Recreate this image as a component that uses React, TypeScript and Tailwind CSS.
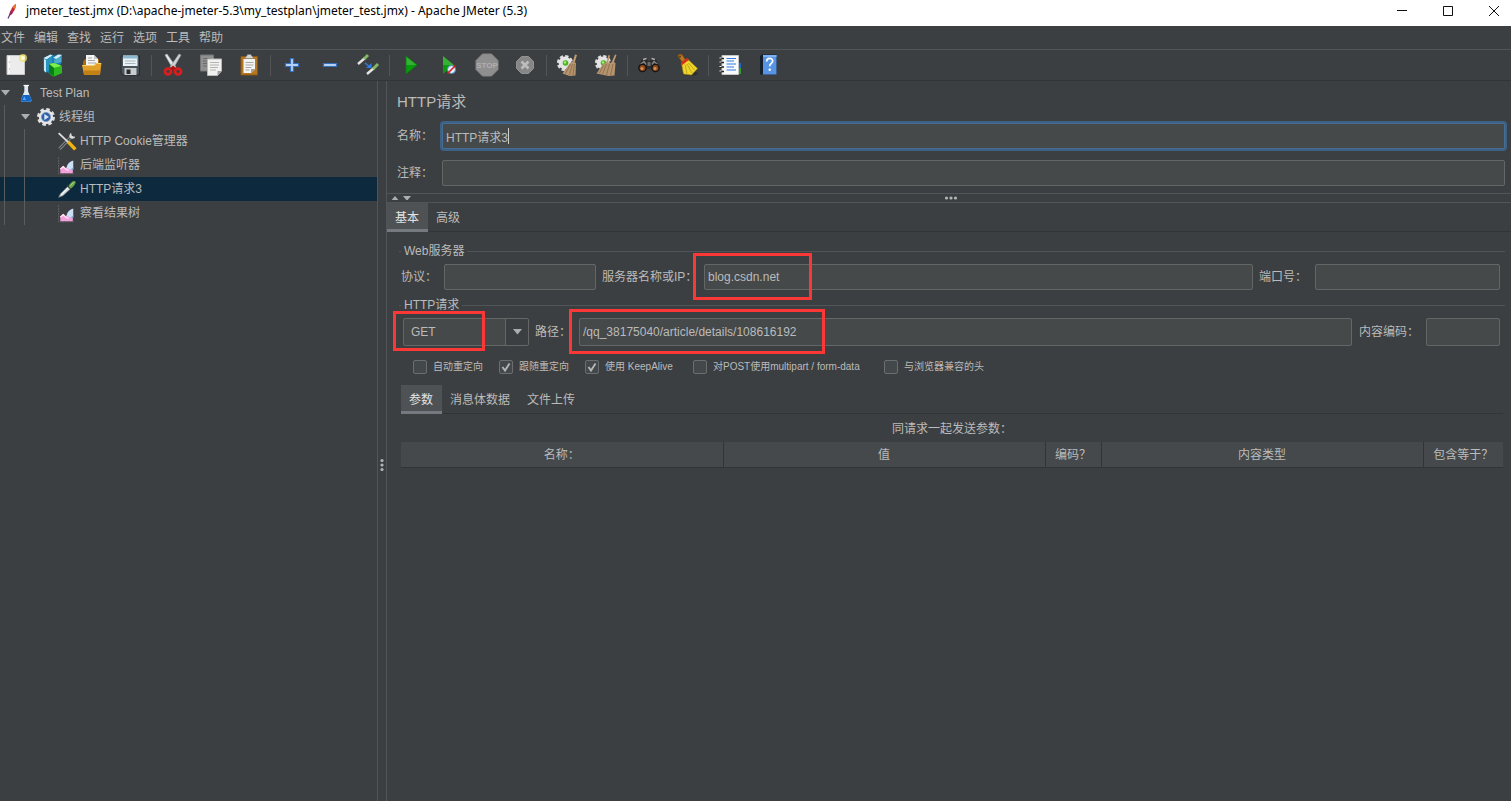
import React from "react";

const line = "border-[#515557]";
const fieldShape = "block w-full rounded-[2px] border bg-[#45494a] px-[3px] text-xs text-[#bbbbbb] outline-none";
const fieldBase = `${fieldShape} border-[#656767]`;
const fieldFocused = `${fieldShape} border-[#466d94] ring-2 ring-[#3d6185]`;

/* ---------- toolbar icons ---------- */

function Svg({ children, className = "size-6" }: { children: React.ReactNode; className?: string }) {
  return (
    <svg viewBox="0 0 24 24" className={className} fill="none" aria-hidden="true">
      {children}
    </svg>
  );
}

const NewIcon = () => (
  <Svg>
    <path d="M3 2.500h17.500v19H3z" fill="#ececec" stroke="#c9c9c9" />
    <path d="M4 3.500h2v17H4z" fill="#fbfbfb" />
    <circle cx="5.500" cy="9" r=".6" fill="#999" />
    <circle cx="5.500" cy="16" r=".6" fill="#999" />
    <circle cx="19" cy="5" r="4" fill="#f3e36a" opacity=".75" />
    <circle cx="19" cy="5" r="2" fill="#fffde0" />
  </Svg>
);

const TemplatesIcon = () => (
  <Svg>
    <path d="M1.500 5l7-3.500 4 1 7-1.500v9l-9 12-9-5z" fill="#1583b4" />
    <path d="M1.500 5l7-3.500 2 1-6 4zM11 5l5-3.500 4 .5-5 4z" fill="#d7eef7" />
    <path d="M4 7l6-4v10l-6 7z" fill="#2c93c0" />
    <path d="M12 7l4-2 3.500-2v6l-7 2z" fill="#4fa9cd" />
    <path d="M2 6v12l2 1.500V7z" fill="#c5e8f5" />
    <path d="M7 11l5-1 8 3v7l-9 3.500-4-3z" fill="#1fa51b" />
    <path d="M7 11l5-1 8 3-8 2z" fill="#7df04b" />
    <path d="M12 15l8-2v7l-8 3.500z" fill="#2bb820" />
    <path d="M7 11l5 4v8l-5-3z" fill="#087f16" />
  </Svg>
);

const OpenIcon = () => (
  <Svg>
    <path d="M3 9l2-3h14l1 16H4z" fill="#a96c0c" />
    <path d="M6 2h8l4 4v9H6z" fill="#f4f4f4" />
    <path d="M14 2v4h4z" fill="#c6c6c6" />
    <path d="M8 5h4M8 7.500h7M8 10h8" stroke="#a6a6a6" />
    <path d="M2 12h12l2-2h5.500l-1.500 11.500H4z" fill="#e0a02a" />
    <path d="M2.500 12.500h12l2-2h4.500" stroke="#f8cd6b" />
    <path d="M4 21.500h16l.4-4H3.400z" fill="#c27f15" />
  </Svg>
);

const SaveIcon = () => (
  <Svg>
    <path d="M3 3h18.500v19H5l-2-2z" fill="#4b545b" stroke="#262b2f" />
    <path d="M5 2.500h14.500v10.500H5z" fill="#e9f2f6" />
    <path d="M5 2.500h14.500v3H5z" fill="#8db9d0" />
    <path d="M7 8h10.500M7 10.500h10.500" stroke="#a9b5bb" />
    <path d="M6.500 15h12v7h-12z" fill="#c9cdd0" />
    <path d="M8.500 16.500h4V21h-4z" fill="#292d30" />
  </Svg>
);

const CutIcon = () => (
  <Svg>
    <path d="M4 2l2-1 9 13-3 2z" fill="#e6e8e8" stroke="#a9adad" strokeWidth=".6" />
    <path d="M20 2l-2-1-9 13 3 2z" fill="#cfd3d3" stroke="#989c9c" strokeWidth=".6" />
    <ellipse cx="7" cy="18.500" rx="3" ry="2.800" stroke="#dc1d1d" strokeWidth="2.800" />
    <ellipse cx="17" cy="18.500" rx="3" ry="2.800" stroke="#dc1d1d" strokeWidth="2.800" />
    <path d="M8.500 15.500l3.500-3 3.500 3-3.500 2z" fill="#b31313" />
  </Svg>
);

const CopyIcon = () => (
  <Svg>
    <path d="M1.500 2h13v16h-13z" fill="#8f9190" stroke="#747676" />
    <path d="M4 5.500h8M4 8h4M4 10.500h4M4 13h4" stroke="#6a6c6c" />
    <path d="M8.500 6h14v12l-4 4.500h-10z" fill="#f1f1ef" stroke="#b9b9b9" />
    <path d="M11 9.500h9M11 12h9M11 14.500h8M11 17h6" stroke="#b4b4b4" />
    <path d="M22.500 18h-4v4.500z" fill="#9c9c9c" />
  </Svg>
);

const PasteIcon = () => (
  <Svg>
    <path d="M4 3.500h16.500V22H4z" fill="#b57722" stroke="#8a5510" />
    <path d="M6.500 6h11.500v10l-4 4H6.500z" fill="#f4f4f2" />
    <path d="M8.500 9.500h8M8.500 12h8M8.500 14.500h6M8.500 17h4" stroke="#a8a8a8" />
    <path d="M18 16h-4v4z" fill="#a0a0a0" />
    <path d="M8 5.500c0-2 2-1.500 2.500-4h3.500c.5 2.500 2.500 2 2.500 4z" fill="#d4d4d4" stroke="#777" strokeWidth=".6" />
  </Svg>
);

const PlusIcon = () => (
  <Svg>
    <path d="M10.500 5.500h3v5h5v3h-5v5h-3v-5h-5v-3h5z" fill="#b5d2f2" stroke="#356fc0" strokeWidth="1.200" />
  </Svg>
);

const MinusIcon = () => (
  <Svg>
    <path d="M5.500 10.500h13v3h-13z" fill="#b5d2f2" stroke="#356fc0" strokeWidth="1.200" />
  </Svg>
);

const ToggleIcon = () => (
  <Svg>
    <path d="M2 11l7-6" stroke="#e4e4e4" strokeWidth="2.400" />
    <path d="M8 6l4-4" stroke="#83b765" strokeWidth="3" />
    <path d="M11 21l7-6" stroke="#e4e4e4" strokeWidth="2.400" />
    <path d="M17 16l5-5" stroke="#83b765" strokeWidth="3" />
    <path d="M9 10l5 4" stroke="#2f7ee6" strokeWidth="1.400" />
    <path d="M15.500 10V15h-5.500z" fill="#2f7ee6" />
  </Svg>
);

const StartIcon = () => (
  <Svg>
    <path d="M7 3l11 9H7z" fill="#35b135" />
    <path d="M7 12h11L7 21z" fill="#099b0d" />
    <path d="M7 3l11 9-11 9z" stroke="#087b0b" strokeWidth=".8" />
  </Svg>
);

const StartNoPauseIcon = () => (
  <Svg>
    <path d="M6 3l11 9H6z" fill="#35b135" />
    <path d="M6 12h11L6 21z" fill="#099b0d" />
    <circle cx="14.500" cy="16.500" r="4" fill="#e5eef8" stroke="#5a86bd" strokeWidth="1" />
    <path d="M10.500 20.500l8-8" stroke="#d81e1e" strokeWidth="1.600" />
  </Svg>
);

const StopIcon = () => (
  <Svg>
    <path d="M7.500 1h9L23 7.500v9L16.500 23h-9L1 16.500v-9z" fill="#8f8f8f" stroke="#858585" />
    <text
      x="12"
      y="15"
      textAnchor="middle"
      fill="#b0b0b0"
      fontSize="8"
      fontWeight="700"
      fontFamily="Liberation Sans Narrow, Liberation Sans, sans-serif"
    >
      STOP
    </text>
  </Svg>
);

const ShutdownIcon = () => (
  <Svg>
    <path d="M8.500 3.500h7l5 5v7l-5 5h-7l-5-5v-7z" fill="#868686" stroke="#919191" />
    <path d="M8.500 8.500l7 7M15.500 8.500l-7 7" stroke="#bdbdbd" strokeWidth="2.600" />
  </Svg>
);

const GearShape = () => (
  <>
    <circle cx="9" cy="10" r="6.600" stroke="#dcdcdc" strokeWidth="3" strokeDasharray="3.200 1.980" />
    <circle cx="9" cy="10" r="6.400" fill="#e4e4e4" />
    <circle cx="9.500" cy="10" r="2.800" fill="#49b51f" />
    <circle cx="9" cy="9.400" r="1.200" fill="#aaf07c" />
  </>
);

const ClearIcon = () => (
  <Svg>
    <GearShape />
    <path d="M19 1.500l2 .5-2.500 8-2-.5z" fill="#c09a70" />
    <path d="M14 10l3-1.500 3 1.500-.5 12.500-6 .5-7-2.500z" fill="#b59470" />
    <path d="M14.500 11l-5 9.500M16.500 11l-3 11M18.500 11l-1.500 11" stroke="#83643f" strokeWidth=".7" />
  </Svg>
);

const ClearAllIcon = () => (
  <Svg>
    <GearShape />
    <path d="M14.500 2l1.500.5-2 8-2-.5zM21 1.500l1.500.5-3 8-2-.5z" fill="#c09a70" />
    <path d="M9 11l4-2 3 1 3-1.500 2.500 1.500-1 12.500-6 .5-12-2.500z" fill="#b59470" />
    <path d="M9.500 12l-4 8M12.500 11l-4 10M15.500 11l-3 11M19 11l-2.500 11" stroke="#83643f" strokeWidth=".7" />
  </Svg>
);

const SearchIcon = () => (
  <Svg>
    <path d="M5 6l4-1 2 3h2l2-3 4 1 4 9-4 4-5-3h-4l-5 3-4-4z" fill="#2b2b2b" />
    <path d="M6 6.500l3.500-1M14.500 5.500l3.500 1" stroke="#b0b0b0" strokeWidth="1.400" />
    <path d="M3.500 11.500L7 8.500l2 3M20.500 11.500L17 8.500l-2 3" stroke="#858585" strokeWidth="1.400" />
    <circle cx="5.500" cy="15" r="3.600" fill="#8f4a1a" stroke="#151515" strokeWidth="1.400" />
    <circle cx="18.500" cy="15" r="3.600" fill="#8f4a1a" stroke="#151515" strokeWidth="1.400" />
    <circle cx="5" cy="15.500" r="1.500" fill="#d98d5b" />
    <circle cx="18" cy="15.500" r="1.500" fill="#d98d5b" />
    <path d="M10.500 9h3v4h-3z" fill="#6c6c6c" />
  </Svg>
);

const BroomIcon = () => (
  <Svg>
    <ellipse cx="15" cy="20.500" rx="8" ry="2" fill="#2b2d2e" />
    <path d="M3 3c0-2 4-2.500 5 0l2.500 4-3.500 2z" fill="#b9741e" stroke="#7e4a0d" strokeWidth=".6" />
    <circle cx="5" cy="3.500" r="1" fill="#5b3a12" />
    <path d="M6.500 10l6-4 10 9.500-6 6.500-8-1z" fill="#efd52c" stroke="#a88d10" strokeWidth=".6" />
    <path d="M6.500 11l6.500-5" stroke="#d92d1b" strokeWidth="2.600" />
    <path d="M10 11.500l2 9M12 11l5 9M13.500 10l6 7" stroke="#b59a17" strokeWidth=".8" />
  </Svg>
);

const LogIcon = () => (
  <Svg>
    <path d="M19 10h4v6h-4z" fill="#2167c5" />
    <path d="M19 15h4v6h-4z" fill="#2f9e2f" />
    <path d="M4 2.500h16.500v19H4z" fill="#fafafa" stroke="#c5c5c5" />
    <path d="M8.500 5.500H18M8.500 8H16M8.500 11H18M8.500 14H16M8.500 17H18" stroke="#2a7fe0" strokeWidth="1.200" />
    <path d="M2 5.500h4M2 9.500h4M2 14h4M2 18.500h4" stroke="#1c1c1c" strokeWidth="1.600" />
    <path d="M1.500 5h2M1.500 9h2M1.500 13.500h2M1.500 18h2" stroke="#f0f0f0" />
  </Svg>
);

const HelpIcon = () => (
  <Svg>
    <path d="M4 3l2-1.500h14.500v20H4z" fill="#16202d" />
    <path d="M7 2h13.500v19.500H7z" fill="#5795e4" />
    <path d="M7 2h13.500v2H7z" fill="#7db2f2" />
    <path d="M10.700 8.500c0-4 6-4 6-.4 0 2.400-3 2.400-3 5.200" stroke="#fff" strokeWidth="1.700" />
    <circle cx="13.700" cy="16.800" r="1.200" fill="#fff" />
  </Svg>
);

const toolGroups: { label: string; icon: React.ReactNode; disabled?: boolean }[][] = [
  [
    { label: "New", icon: <NewIcon /> },
    { label: "Templates", icon: <TemplatesIcon /> },
    { label: "Open", icon: <OpenIcon /> },
    { label: "Save", icon: <SaveIcon /> },
  ],
  [
    { label: "Cut", icon: <CutIcon /> },
    { label: "Copy", icon: <CopyIcon /> },
    { label: "Paste", icon: <PasteIcon /> },
  ],
  [
    { label: "Expand all", icon: <PlusIcon /> },
    { label: "Collapse all", icon: <MinusIcon /> },
    { label: "Toggle", icon: <ToggleIcon /> },
  ],
  [
    { label: "Start", icon: <StartIcon /> },
    { label: "Start no pauses", icon: <StartNoPauseIcon /> },
    { label: "Stop", icon: <StopIcon />, disabled: true },
    { label: "Shutdown", icon: <ShutdownIcon />, disabled: true },
  ],
  [
    { label: "Clear", icon: <ClearIcon /> },
    { label: "Clear all", icon: <ClearAllIcon /> },
  ],
  [
    { label: "Search", icon: <SearchIcon /> },
    { label: "Reset search", icon: <BroomIcon /> },
  ],
  [
    { label: "Function helper", icon: <LogIcon /> },
    { label: "Help", icon: <HelpIcon /> },
  ],
];

/* ---------- tree icons ---------- */

const tree = "size-5 shrink-0";

const FlaskIcon = () => (
  <Svg className={tree}>
    <path d="M10 3h4.500v7l4 10c.5 1.500-.5 2.500-1.500 2.500H7.500c-1 0-2-1-1.500-2.500l4-10z" fill="#dfe9f2" />
    <path d="M8.300 14.500h8l2.500 6c.3 1.200-.5 2-2 2H7.600c-1.500 0-2.100-.8-1.800-2z" fill="#1566c4" />
    <path d="M10 16l-2 4.500h4z" fill="#5aa5f0" />
    <path d="M9 3h6.500" stroke="#fff" strokeWidth="1.500" />
  </Svg>
);

const ThreadIcon = () => (
  <Svg className={tree}>
    <circle cx="12" cy="12" r="9" stroke="#dedede" strokeWidth="3.600" strokeDasharray="4.200 2.870" />
    <circle cx="12" cy="12" r="8.600" fill="#e6e6e6" />
    <circle cx="12" cy="12" r="5.500" fill="#2e61a8" stroke="#7f97b8" />
    <path d="M10 8.500l5.500 3.500-5.500 3.500z" fill="#d8e8fa" />
  </Svg>
);

const ToolsIcon = () => (
  <Svg className={tree}>
    <path d="M3 21.500L18 6" stroke="#8b8e8f" strokeWidth="3.600" />
    <path d="M3 21.500L18 6" stroke="#3d4042" strokeWidth="1.400" />
    <path d="M22 7c-1 2.500-4 3-6 1.500s-1.500-5 1-6.500l.5 3.500 2 1z" fill="#dcdcdc" />
    <path d="M2 2.500L14 14" stroke="#dedede" strokeWidth="2.200" />
    <path d="M13.500 13l8.500 9" stroke="#f2b50f" strokeWidth="4.200" />
  </Svg>
);

const ChartIcon = () => (
  <Svg className={tree}>
    <path d="M2 3v19.500h18" stroke="#6a6d6f" strokeDasharray="2 1" />
    <path d="M4 22v-6l3.500-3 3 2.500 2-1 6.500 3.500v4z" fill="#f2a0dc" />
    <path d="M4 17l3.500-3 3 3 3.500 1.500" stroke="#fbe3f5" strokeWidth="1.500" />
    <path d="M11.500 15c.5-4 4-7.500 8-8.500v11c-3 .5-6-.5-8-2.500z" fill="#cbdff6" />
    <path d="M14.500 17c2 .5 4-.5 5-2.500v3z" fill="#7fa5d4" />
  </Svg>
);

const PipetteIcon = () => (
  <Svg className={tree}>
    <path d="M2 22l2-4 9-9 3 3-9 8z" fill="#cfd3d3" stroke="#888b8b" strokeWidth=".7" />
    <path d="M5 19l8-8" stroke="#fff" strokeWidth="1.300" />
    <path d="M12 7l5 5" stroke="#2a3a2a" strokeWidth="2" />
    <path d="M14 9c0-2 4-6 6-6.500s3 1 2 3-3 5-5.500 6z" fill="#6da850" />
    <path d="M16 8l4-4" stroke="#a6d68a" strokeWidth="1.200" />
  </Svg>
);

const Triangle = ({ up = false, className = "w-[9px]" }: { up?: boolean; className?: string }) => (
  <svg viewBox="0 0 10 6" className={className} aria-hidden="true">
    <path d={up ? "M0 6h10L5 0z" : "M0 0h10L5 6z"} fill="#adadad" />
  </svg>
);

const children = [
  { label: "HTTP Cookie管理器", icon: <ToolsIcon /> },
  { label: "后端监听器", icon: <ChartIcon /> },
  { label: "HTTP请求3", icon: <PipetteIcon />, selected: true },
  { label: "察看结果树", icon: <ChartIcon /> },
];

function TestTree() {
  return (
    <nav className={`w-[378px] shrink-0 border-r ${line}`}>
      <ul>
        <li>
          <div className="flex h-6 items-center pl-px">
            <Triangle />
            <span className="ml-[6px] flex">
              <FlaskIcon />
            </span>
            <span className="ml-1">Test Plan</span>
          </div>
          <ul className="relative before:absolute before:inset-y-0 before:left-1 before:z-10 before:w-px before:bg-[#5a5d5f]">
            <li>
              <div className="flex h-6 items-center pl-[21px]">
                <Triangle />
                <span className="ml-[6px] flex">
                  <ThreadIcon />
                </span>
                <span className="ml-[3px]">线程组</span>
              </div>
              <ul className="relative before:absolute before:inset-y-0 before:left-6 before:z-10 before:w-px before:bg-[#5a5d5f]">
                {children.map((c) => (
                  <li
                    key={c.label}
                    className={`flex h-6 items-center gap-[3px] pl-[57px] ${c.selected ? "bg-[#0d293e]" : ""}`}
                  >
                    {c.icon}
                    <span>{c.label}</span>
                  </li>
                ))}
              </ul>
            </li>
          </ul>
        </li>
      </ul>
    </nav>
  );
}

function Tabs({ items }: { items: string[] }) {
  return (
    <div role="tablist" className="flex h-[29px] shadow-[inset_0_-1px_0_#323436]">
      {items.map((t, i) => (
        <button
          key={t}
          role="tab"
          aria-selected={i === 0}
          className={`border-b-[3px] pt-[3px] pr-[9px] pl-2 ${
            i === 0 ? "border-[#747a80] bg-[#4e5254] text-[#e4e4e4]" : "border-transparent"
          }`}
        >
          {t}
        </button>
      ))}
    </div>
  );
}

function Group({ title, children }: { title: string; children: React.ReactNode }) {
  return (
    <fieldset>
      <legend className="flex h-[18px] w-full items-center gap-[3px] leading-[18px]">
        <span className="h-px w-[2px] bg-[#515557]" />
        <span>{title}</span>
        <span className="h-px flex-1 bg-[#515557]" />
      </legend>
      {children}
    </fieldset>
  );
}

function Highlight({ className }: { className: string }) {
  return <span className={`pointer-events-none absolute z-20 border-[3px] border-[#fb3836] ${className}`} />;
}

function Check({ label, checked = false }: { label: string; checked?: boolean }) {
  return (
    <label className="flex items-center gap-[6px] whitespace-nowrap text-[10px]">
      <span className="relative flex size-[14px]">
        <input
          type="checkbox"
          defaultChecked={checked}
          className="peer size-[14px] appearance-none rounded-[2px] border border-[#6b6d6e] bg-[#43494a]"
        />
        <svg
          viewBox="0 0 14 14"
          className="pointer-events-none absolute inset-0 hidden peer-checked:block"
          fill="none"
          aria-hidden="true"
        >
          <path d="M3.500 7l2.500 3.500L10.500 3.500" stroke="#b5b5b5" strokeWidth="1.900" />
        </svg>
      </span>
      {label}
    </label>
  );
}

export default function App() {
  return (
    <div
      lang="zh-CN"
      className="flex min-h-screen flex-col bg-[#3c3f41] font-['Liberation_Sans','Noto_Sans_CJK_SC',sans-serif] text-xs text-[#bbbbbb]"
    >
      <header className="flex h-[26px] items-start justify-between bg-white text-black">
        <div className="flex h-[22px] items-center gap-[6px] pl-1">
          <svg viewBox="0 0 16 16" className="size-4" fill="none" aria-hidden="true">
            <path d="M4 15.500L7 9" stroke="#5b3a80" strokeWidth="1.200" />
            <path d="M5.500 12.500C5.500 9 8 3.500 11.500 1c1.200 2-1 7.500-4.500 11z" fill="#c9243f" />
            <path d="M8.800 4.500C9.800 2.500 10.600 1.500 11.500 1c1 1.500.3 3.300-.8 5z" fill="#ee7a25" />
            <path d="M5.500 12.500C5.500 10.500 6 8.800 6.700 7.800l2 2.200z" fill="#8c2467" />
          </svg>
          <h1 className="font-['Noto_Sans',sans-serif] text-xs">
            jmeter_test.jmx (D:\apache-jmeter-5.3\my_testplan\jmeter_test.jmx) - Apache JMeter (5.3)
          </h1>
        </div>
        <div className="flex h-[22px] shrink-0">
          <button aria-label="Minimize" className="flex w-[46px] items-center justify-center">
            <svg viewBox="0 0 10 10" className="size-[10px]" aria-hidden="true">
              <path d="M0 4h10v1H0z" fill="#111" />
            </svg>
          </button>
          <button aria-label="Maximize" className="flex w-[46px] items-center justify-center">
            <svg viewBox="0 0 10 10" className="size-[10px]" fill="none" aria-hidden="true">
              <path d="M.5 .5h9v9H.5z" stroke="#111" />
            </svg>
          </button>
          <button aria-label="Close" className="flex w-10 items-center pl-[18px]">
            <svg viewBox="0 0 10 10" className="size-[10px]" fill="none" aria-hidden="true">
              <path d="M0 0l10 10M10 0L0 10" stroke="#111" />
            </svg>
          </button>
        </div>
      </header>

      <nav className={`flex h-6 gap-[9px] border-b pl-px ${line}`}>
        {["文件", "编辑", "查找", "运行", "选项", "工具", "帮助"].map((m) => (
          <button key={m}>{m}</button>
        ))}
      </nav>

      <div role="toolbar" className="flex h-[31px] items-center border-b border-[#323436]">
        {toolGroups.map((group, i) => (
          <div
            key={i}
            className={`flex h-[21px] items-center gap-[6px] ${i > 0 ? `ml-[5px] border-l pl-[5px] ${line}` : ""}`}
          >
            {group.map((t) => (
              <button key={t.label} aria-label={t.label} disabled={t.disabled} className="flex w-8 justify-center">
                {t.icon}
              </button>
            ))}
          </div>
        ))}
      </div>

      <div className="flex flex-1">
        <TestTree />
        <div className={`flex w-[9px] shrink-0 flex-col items-center justify-center border-r pt-12 ${line}`}>
          <svg viewBox="0 0 4 14" className="h-[14px] w-1" fill="#b4b4b4" aria-hidden="true">
            <circle cx="2" cy="2.500" r="1.600" />
            <circle cx="2" cy="7" r="1.600" />
            <circle cx="2" cy="11.500" r="1.600" />
          </svg>
        </div>

        <main className="min-w-0 flex-1">
          <div className="pt-[9px] pr-[6px] pl-[10px]">
            <h2 className="text-[15px] leading-6">HTTP请求</h2>
            <div className="mt-[9px] flex items-center gap-[9px]">
              <label htmlFor="name" className="w-9">
                名称：
              </label>
              <div className="relative flex-1">
                <input id="name" defaultValue="HTTP请求3" className={`${fieldFocused} h-[26px]`} />
                <span className="pointer-events-none absolute top-[5px] left-[66px] h-4 w-px bg-[#d0d0d0]" />
              </div>
            </div>
            <div className="mt-[11px] flex items-center gap-[9px]">
              <label htmlFor="comments" className="w-9">
                注释：
              </label>
              <div className="flex-1">
                <input id="comments" className={`${fieldBase} h-[26px]`} />
              </div>
            </div>
          </div>

          <div className={`mt-[7px] grid h-[10px] grid-cols-3 items-center border-y pl-1 ${line}`}>
            <div className="flex gap-1">
              <Triangle up className="w-2" />
              <Triangle className="w-2" />
            </div>
            <svg viewBox="0 0 14 4" className="h-1 w-[14px] justify-self-center" fill="#b4b4b4" aria-hidden="true">
              <circle cx="2.500" cy="2" r="1.600" />
              <circle cx="7" cy="2" r="1.600" />
              <circle cx="11.500" cy="2" r="1.600" />
            </svg>
          </div>

          <Tabs items={["基本", "高级"]} />

          <div className="pt-[10px] pr-[6px] pl-3">
            <Group title="Web服务器">
              <div className="flex items-center pt-1 pr-[5px] pb-[6px] pl-[2px]">
                <label htmlFor="protocol" className="w-[43px]">
                  协议：
                </label>
                <div className="w-[152px]">
                  <input id="protocol" className={`${fieldBase} h-[26px]`} />
                </div>
                <label htmlFor="server" className="ml-[6px] w-[102px] whitespace-nowrap">
                  服务器名称或IP：
                </label>
                <div className="relative flex-1">
                  <input id="server" defaultValue="blog.csdn.net" className={`${fieldBase} h-[26px]`} />
                  <Highlight className="-top-[11px] -left-[11px] h-[47px] w-[119px]" />
                </div>
                <label htmlFor="port" className="ml-[6px] w-14 whitespace-nowrap">
                  端口号：
                </label>
                <div className="w-[185px]">
                  <input id="port" className={`${fieldBase} h-[26px]`} />
                </div>
              </div>
            </Group>

            <Group title="HTTP请求">
              <div className="flex items-center pt-1 pr-[5px] pl-1">
                <div className="relative w-[126px]">
                  <select
                    aria-label="HTTP method"
                    className={`${fieldBase} h-7 appearance-none bg-linear-to-r from-[#45494a] from-[101px] to-[#3c3f41] to-[101px] pl-[7px]`}
                  >
                    <option>GET</option>
                    <option>POST</option>
                  </select>
                  <span className="pointer-events-none absolute inset-y-0 right-0 flex w-6 items-center justify-center border-l border-[#656767]">
                    <Triangle />
                  </span>
                  <Highlight className="-top-[7px] -left-[10px] h-10 w-[92px]" />
                </div>
                <label htmlFor="path" className="ml-[6px] w-11 whitespace-nowrap">
                  路径：
                </label>
                <div className="relative flex-1">
                  <input
                    id="path"
                    defaultValue="/qq_38175040/article/details/108616192"
                    className={`${fieldBase} h-7`}
                  />
                  <Highlight className="-top-[9px] -left-[10px] h-[45px] w-[256px]" />
                </div>
                <label htmlFor="encoding" className="ml-[7px] w-[67px] whitespace-nowrap">
                  内容编码：
                </label>
                <div className="w-[74px]">
                  <input id="encoding" className={`${fieldBase} h-7`} />
                </div>
              </div>
              <div className="mt-[14px] grid grid-cols-[86px_86px_108px_191px_auto] pl-[14px]">
                <Check label="自动重定向" />
                <Check label="跟随重定向" checked />
                <Check label="使用 KeepAlive" checked />
                <Check label="对POST使用multipart / form-data" />
                <Check label="与浏览器兼容的头" />
              </div>
            </Group>

            <div className="pt-[11px] pr-[2px] pl-[2px]">
              <Tabs items={["参数", "消息体数据", "文件上传"]} />
              <table className="w-full table-fixed border-collapse">
                <caption className="h-7 pt-px leading-7">同请求一起发送参数：</caption>
                <colgroup>
                  <col />
                  <col />
                  <col className="w-14" />
                  <col />
                  <col className="w-20" />
                </colgroup>
                <thead>
                  <tr className="h-[25px] border-b border-[#323436] bg-[#45494b]">
                    {["名称：", "值", "编码？", "内容类型", "包含等于？"].map((h) => (
                      <th
                        key={h}
                        scope="col"
                        className="border-r border-[#323436] p-0 pt-[2px] font-normal last:border-r-0"
                      >
                        {h}
                      </th>
                    ))}
                  </tr>
                </thead>
              </table>
            </div>
          </div>
        </main>
      </div>
    </div>
  );
}
